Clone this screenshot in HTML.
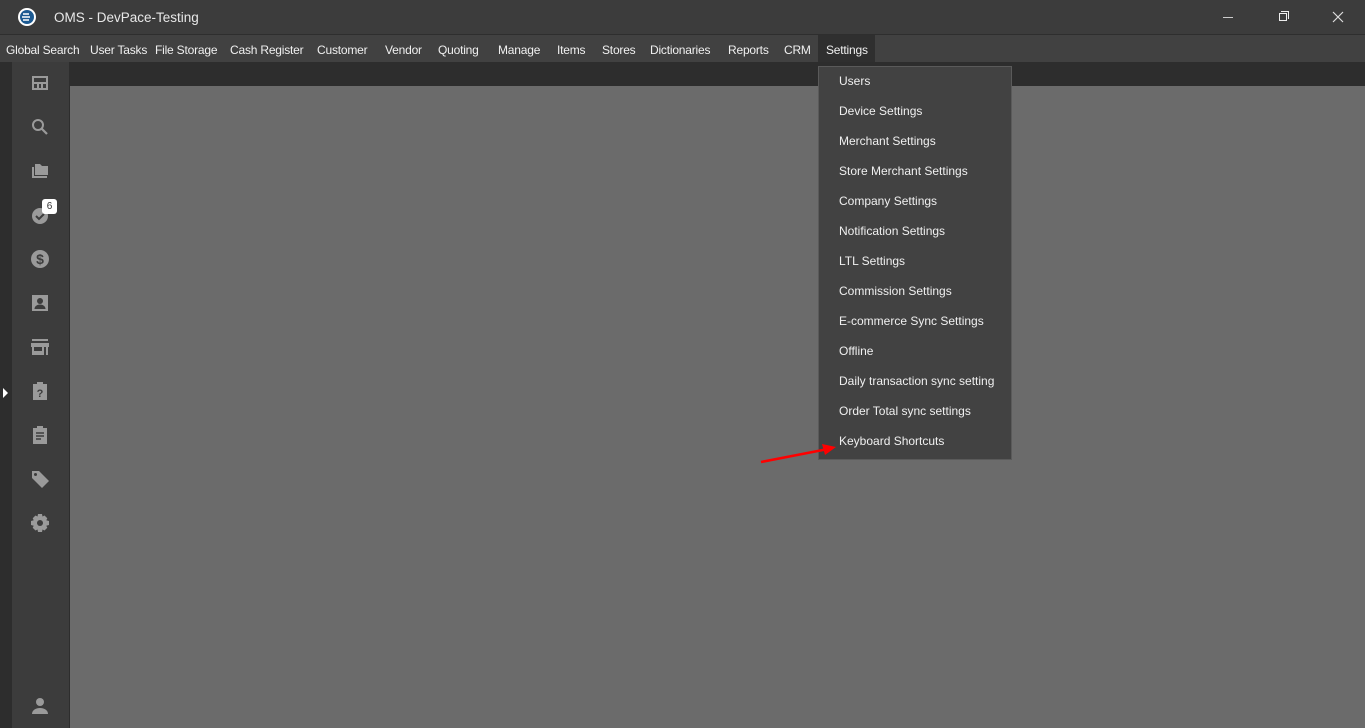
<!DOCTYPE html>
<html><head><style>
*{margin:0;padding:0;box-sizing:border-box}
body{width:1365px;height:728px;overflow:hidden;background:#6b6b6b;font-family:"Liberation Sans",sans-serif;position:relative}
.a{position:absolute}
.m{position:absolute;top:43px;font-size:12px;color:#f0f0f0;white-space:nowrap;letter-spacing:-0.2px}
.d{position:absolute;left:839px;font-size:12px;color:#f0f0f0;white-space:nowrap;letter-spacing:0px}
svg.i{position:absolute;width:20px;height:20px;fill:#9a9a9a}
</style></head><body>
<div class="a" style="left:0;top:0;width:1365px;height:34px;background:#3c3c3c"></div>
<div class="a" style="left:0;top:34px;width:1365px;height:1px;background:#2e2e2e"></div>
<div class="a" style="left:0;top:35px;width:1365px;height:27px;background:#414141"></div>
<div class="a" style="left:0;top:62px;width:1365px;height:24px;background:#2d2d2d"></div>
<div class="a" style="left:0;top:62px;width:12px;height:666px;background:#2d2d2d"></div>
<div class="a" style="left:12px;top:62px;width:57px;height:666px;background:#3c3c3c"></div>
<div class="a" style="left:69px;top:62px;width:1px;height:666px;background:#2d2d2d"></div>
<svg class="a" style="left:17px;top:7px" width="20" height="20" viewBox="0 0 20 20"><circle cx="10" cy="10" r="9" fill="#fff"/><circle cx="10" cy="10" r="7" fill="#1c5a92"/><path d="M6 7h6M5 10h8M6 13h6" stroke="#fff" stroke-width="1.6"/></svg>
<div class="a" style="left:54px;top:10px;font-size:13.5px;color:#e8e8e8">OMS - DevPace-Testing</div>
<div class="a" style="left:1223px;top:17px;width:10px;height:1px;background:#ccc"></div>
<div class="a" style="left:1279px;top:13px;width:8px;height:8px;border:1px solid #eee"></div>
<div class="a" style="left:1281px;top:11px;width:8px;height:8px;border-top:1px solid #eee;border-right:1px solid #eee"></div>
<svg class="a" style="left:1332px;top:11px" width="12" height="12"><path d="M1 1L11 11M11 1L1 11" stroke="#ddd" stroke-width="1.2"/></svg>
<div class="a" style="left:818px;top:35px;width:57px;height:27px;background:#2f2f2f"></div>
<div class="m" style="left:6px">Global Search</div>
<div class="m" style="left:90px">User Tasks</div>
<div class="m" style="left:155px">File Storage</div>
<div class="m" style="left:230px">Cash Register</div>
<div class="m" style="left:317px">Customer</div>
<div class="m" style="left:385px">Vendor</div>
<div class="m" style="left:438px">Quoting</div>
<div class="m" style="left:498px">Manage</div>
<div class="m" style="left:557px">Items</div>
<div class="m" style="left:602px">Stores</div>
<div class="m" style="left:650px">Dictionaries</div>
<div class="m" style="left:728px">Reports</div>
<div class="m" style="left:784px">CRM</div>
<div class="m" style="left:826px">Settings</div>
<div class="a" style="left:818px;top:66px;width:194px;height:394px;background:#424242;border:1px solid #5a5a5a"></div>
<div class="d" style="top:74px">Users</div>
<div class="d" style="top:104px">Device Settings</div>
<div class="d" style="top:134px">Merchant Settings</div>
<div class="d" style="top:164px">Store Merchant Settings</div>
<div class="d" style="top:194px">Company Settings</div>
<div class="d" style="top:224px">Notification Settings</div>
<div class="d" style="top:254px">LTL Settings</div>
<div class="d" style="top:284px">Commission Settings</div>
<div class="d" style="top:314px">E-commerce Sync Settings</div>
<div class="d" style="top:344px">Offline</div>
<div class="d" style="top:374px">Daily transaction sync setting</div>
<div class="d" style="top:404px">Order Total sync settings</div>
<div class="d" style="top:434px">Keyboard Shortcuts</div>
<svg class="a" style="left:758px;top:440px" width="80" height="26"><path d="M3 22L70 9" stroke="#f00" stroke-width="2.5"/><path d="M78 7L64 4L67 15Z" fill="#f00"/></svg>
<div class="a" style="left:3px;top:388px;width:0;height:0;border-top:5px solid transparent;border-bottom:5px solid transparent;border-left:5px solid #fff"></div>
<svg class="i" style="left:30px;top:73px" viewBox="0 0 20 20"><path d="M2 3h16v14H2zM4 5v4h12V5zM4 11v4h3v-4zm5 0v4h2v-4zm4 0v4h3v-4z" fill-rule="evenodd"/></svg>
<svg class="i" style="left:30px;top:117px" viewBox="0 0 20 20"><circle cx="8" cy="8" r="5" fill="none" stroke="#9a9a9a" stroke-width="2"/><path d="M11.5 11.5L17 17" stroke="#9a9a9a" stroke-width="2.2"/></svg>
<svg class="i" style="left:30px;top:161px" viewBox="0 0 20 20"><path d="M2 6h2v9h13v2H2zM5 3h5l2 2h6v9H5z"/></svg>
<svg class="i" style="left:30px;top:205px" viewBox="0 0 20 20"><circle cx="10" cy="11" r="8"/><path d="M6 11l3 3 5-5" stroke="#3c3c3c" stroke-width="2" fill="none"/></svg>
<div class="a" style="left:42px;top:199px;width:15px;height:15px;background:#fff;border-radius:3px;font-size:10px;color:#333;text-align:center;line-height:15px">6</div>
<svg class="i" style="left:30px;top:249px" viewBox="0 0 20 20"><circle cx="10" cy="10" r="9"/><text x="10" y="15" font-size="14" font-weight="bold" text-anchor="middle" fill="#3c3c3c" font-family="Liberation Sans">$</text></svg>
<svg class="i" style="left:30px;top:293px" viewBox="0 0 20 20"><path d="M2 2h16v16H2z"/><circle cx="10" cy="8" r="3" fill="#3c3c3c"/><path d="M4.5 16c0-3 3-4.5 5.5-4.5s5.5 1.5 5.5 4.5z" fill="#3c3c3c"/></svg>
<svg class="i" style="left:30px;top:337px" viewBox="0 0 20 20"><path d="M2 2h16v2H2zM1 6h18v4H1zM2 10h2v8H2zM16 10h2v8h-2zM4 14h8v-4h2v8H4z"/></svg>
<svg class="i" style="left:30px;top:381px" viewBox="0 0 20 20"><path d="M3 3h4V1h6v2h4v16H3z"/><text x="10" y="16" font-size="11" font-weight="bold" text-anchor="middle" fill="#3c3c3c" font-family="Liberation Sans">?</text></svg>
<svg class="i" style="left:30px;top:425px" viewBox="0 0 20 20"><path d="M3 3h4V1h6v2h4v16H3z"/><path d="M6 8h8M6 11h8M6 14h5" stroke="#3c3c3c" stroke-width="1.5"/></svg>
<svg class="i" style="left:30px;top:469px" viewBox="0 0 20 20"><path d="M2 2h7l10 10-7 7L2 9z"/><circle cx="5.5" cy="5.5" r="1.5" fill="#3c3c3c"/></svg>
<svg class="i" style="left:30px;top:513px" viewBox="0 0 20 20"><path d="M8 1h4l.5 2.5 2-1 2.8 2.8-1 2 2.7.7v4l-2.7.7 1 2-2.8 2.8-2-1L12 19H8l-.5-2.5-2 1-2.8-2.8 1-2L1 12V8l2.7-.7-1-2 2.8-2.8 2 1z"/><circle cx="10" cy="10" r="3" fill="#3c3c3c"/></svg>
<svg class="i" style="left:30px;top:696px" viewBox="0 0 20 20"><circle cx="10" cy="6" r="4"/><path d="M2 18c0-4 4-6 8-6s8 2 8 6z"/></svg>
</body></html>
